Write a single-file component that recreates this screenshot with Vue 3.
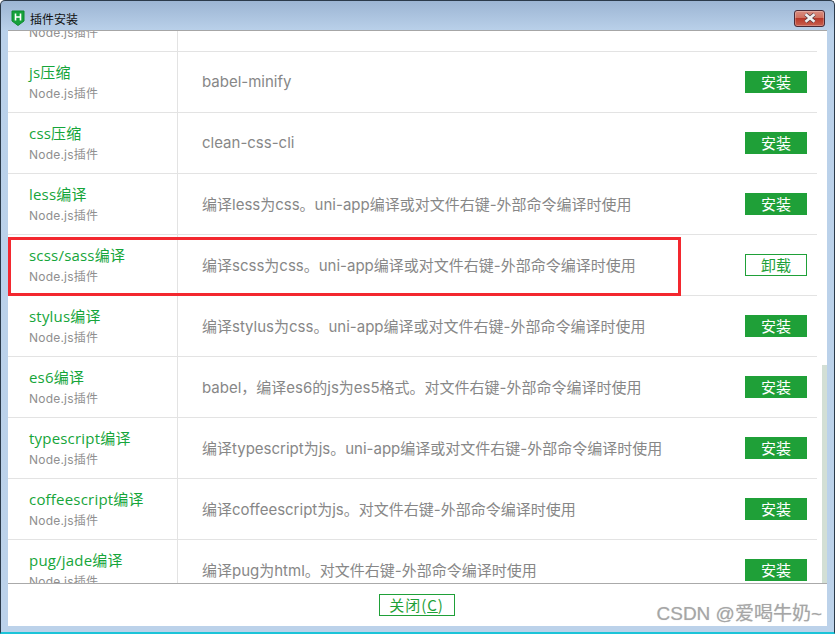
<script setup>
const sub = 'Node.js插件'
const rows = [
  { name: '', desc: '', hidden: true },
  { name: 'js压缩', desc: 'babel-minify' },
  { name: 'css压缩', desc: 'clean-css-cli' },
  { name: 'less编译', desc: '编译less为css。uni-app编译或对文件右键-外部命令编译时使用' },
  { name: 'scss/sass编译', desc: '编译scss为css。uni-app编译或对文件右键-外部命令编译时使用', installed: true },
  { name: 'stylus编译', desc: '编译stylus为css。uni-app编译或对文件右键-外部命令编译时使用' },
  { name: 'es6编译', desc: 'babel，编译es6的js为es5格式。对文件右键-外部命令编译时使用' },
  { name: 'typescript编译', desc: '编译typescript为js。uni-app编译或对文件右键-外部命令编译时使用' },
  { name: 'coffeescript编译', desc: '编译coffeescript为js。对文件右键-外部命令编译时使用' },
  { name: 'pug/jade编译', desc: '编译pug为html。对文件右键-外部命令编译时使用' }
]
</script>

<template>
  <div class="window">
    <header class="titlebar">
      <svg class="logo" width="14" height="16" viewBox="0 0 14 16">
        <path d="M1 1h12v10l-6 4.5L1 11z" fill="#16a13a" stroke="#0f8a2e" stroke-width="1" />
        <path d="M4.5 3.5v7M9.5 3.5v7M4.5 7h5" fill="none" stroke="#fff" stroke-width="1.6" />
      </svg>
      <span class="title">插件安装</span>
      <button class="close" type="button" aria-label="关闭">
        <svg width="16" height="12" viewBox="0 0 16 12">
          <path d="M3.5 2.2 12.5 9.8M12.5 2.2 3.5 9.8" stroke="#5a3a40" stroke-width="4" fill="none" />
          <path d="M3.5 2.2 12.5 9.8M12.5 2.2 3.5 9.8" stroke="#f0f0f0" stroke-width="2.6" fill="none" />
        </svg>
      </button>
    </header>

    <div class="body">
      <main class="list">
        <div class="rows">
          <div v-for="(row, i) in rows" :key="i" class="row">
            <div class="col-name">
              <div class="name">{{ row.name }}</div>
              <div class="sub">{{ sub }}</div>
            </div>
            <div class="col-desc">
              <span class="desc">{{ row.desc }}</span>
              <button v-if="!row.hidden" type="button" class="action" :class="{ outline: row.installed }">
                {{ row.installed ? '卸载' : '安装' }}
              </button>
            </div>
          </div>
        </div>
        <div class="thumb"></div>
        <div class="highlight"></div>
      </main>
      <footer class="footer">
        <button type="button" class="close-btn">关闭(<u>C</u>)</button>
      </footer>
      <div class="watermark">CSDN @爱喝牛奶~</div>
    </div>
  </div>
</template>

<style>
html, body { margin: 0; padding: 0; background: #fff; }
</style>

<style scoped>
.window {
  box-sizing: border-box;
  width: 835px;
  height: 634px;
  display: flex;
  flex-direction: column;
  padding: 0 7px 6px;
  background: linear-gradient(#9cb5d3 0, #bad1ea 30px, #bcd2ea 100%);
  border: 1px solid #2b3a4a;
  border-width: 1px 1px 2px 1px;
  border-bottom-color: #1cc4d8;
  border-radius: 5px 5px 0 0;
  font-family: Inter, "Noto Sans CJK SC", sans-serif;
  overflow: hidden;
}
.titlebar {
  box-sizing: border-box;
  height: 29px;
  flex: none;
  display: flex;
  align-items: center;
  gap: 5px;
  padding: 5px 2px 0 3px;
}
.logo { flex: none; }
.title {
  font-size: 12px;
  color: #111;
  font-family: "Noto Sans CJK SC", sans-serif;
}
.close {
  margin-left: auto;
  width: 31px;
  height: 17px;
  padding: 0;
  display: flex;
  align-items: center;
  justify-content: center;
  border: 1px solid #4a2a36;
  border-radius: 3px;
  background: linear-gradient(#d98d80 0, #d0705f 45%, #b8392a 50%, #c8604f 100%);
  box-shadow: inset 0 0 0 1px rgba(255, 255, 255, 0.25);
}
.body {
  flex: 1;
  min-height: 0;
  background: #fff;
  display: flex;
  flex-direction: column;
  border-top: 1px solid #a6a6a6;
  position: relative;
}
.list {
  height: 552px;
  flex: none;
  overflow: hidden;
  position: relative;
  border-bottom: 1px solid #aaa;
}
.rows {
  margin-top: -40px;
  width: 809px;
}
.row {
  box-sizing: border-box;
  height: 61px;
  display: grid;
  grid-template-columns: 170px 1fr;
  border-bottom: 1px solid #e3e3e3;
}
.col-name {
  box-sizing: border-box;
  padding: 10px 0 0 21px;
  border-right: 1px solid #e3e3e3;
}
.name {
  font-family: "Open Sans", "Noto Sans CJK SC", sans-serif;
  font-size: 15px;
  letter-spacing: 0.2px;
  line-height: 20px;
  height: 20px;
  color: #16a53a;
}
.sub {
  font-size: 12px;
  letter-spacing: 0.2px;
  line-height: 20px;
  margin-top: 2px;
  color: #8f8f8f;
}
.col-desc {
  display: flex;
  align-items: center;
  justify-content: space-between;
  padding: 0 10px 0 24px;
}
.desc {
  font-size: 15px;
  color: #878787;
  margin-bottom: 1px;
}
.action {
  box-sizing: border-box;
  width: 62px;
  height: 22px;
  padding: 0 0 1px;
  border: 1px solid #1fa038;
  background: #1fa038;
  color: #fff;
  font: 15px/19px "Noto Sans CJK SC", sans-serif;
}
.action.outline {
  background: #fff;
  color: #1fa038;
}
.thumb {
  position: absolute;
  right: 0;
  top: 334px;
  bottom: 0;
  width: 5px;
  background: #d3dfd5;
}
.highlight {
  position: absolute;
  box-sizing: border-box;
  left: 0;
  top: 206px;
  width: 673px;
  height: 59px;
  border: 3px solid #f3282f;
}
.footer {
  flex: 1;
  display: flex;
  align-items: center;
  justify-content: center;
  padding-bottom: 1px;
}
.close-btn {
  box-sizing: border-box;
  width: 76px;
  height: 22px;
  padding: 0;
  margin-left: -2px;
  border: 1px solid #1fa038;
  background: #fff;
  color: #1fa038;
  font: 15px/20px "Noto Sans CJK SC", sans-serif;
  letter-spacing: 1px;
}
.watermark {
  position: absolute;
  right: 5px;
  bottom: 1px;
  font: 19px/22px "Liberation Sans", "Noto Sans CJK SC", sans-serif;
  color: #a6a6a6;
  text-shadow: 0 0 1px rgba(0, 0, 0, 0.2);
}
</style>
